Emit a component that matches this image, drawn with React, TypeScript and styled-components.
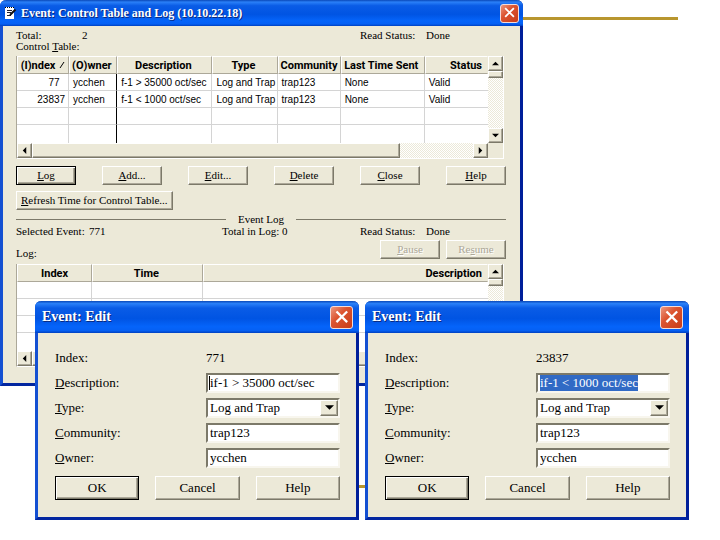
import React, { useEffect, useRef } from "react";
import styled, { createGlobalStyle, css } from "styled-components";

const face = "#ece9d8";
const shade = "#7c7969";

const GlobalStyle = createGlobalStyle`
  *, *::before, *::after { box-sizing: border-box; }
  body { margin: 0; background: #fff; color: #000; font-family: "Liberation Serif", serif; }
  button, input, select { font: inherit; color: inherit; margin: 0; border-radius: 0; }
`;

const Desktop = styled.main`
  position: relative;
  min-height: 100vh;
  overflow: hidden;
`;

const Rule = styled.div<{ $top: number }>`
  position: absolute;
  top: ${(p) => p.$top}px;
  left: 42px;
  right: 42px;
  height: 3px;
  background: #b8962e;
`;

const Win = styled.section`
  position: absolute;
  border: 3px solid #0a3cc0;
  border-top: 0;
  border-left-color: #1450d2;
  border-right-color: #001f9a;
  border-bottom-color: #0226a0;
  border-radius: 6px 6px 0 0;
  background: ${face};
`;

const MainWin = styled(Win)`
  top: 0;
  left: 0;
  width: calc(75% - 17px);
  font-size: 11px;
  line-height: 11px;
`;

const DialogWin = styled(Win)<{ $left: string; $z: number }>`
  top: 301px;
  left: ${(p) => p.$left};
  z-index: ${(p) => p.$z};
  width: 45%;
  font-size: 13px;
  line-height: 16px;
`;

const TitleBar = styled.header<{ $size: "small" | "large" }>`
  display: flex;
  align-items: center;
  gap: 4px;
  margin: 0 -3px;
  height: ${(p) => (p.$size === "small" ? 26 : 32)}px;
  padding: 0 ${(p) => (p.$size === "small" ? 4 : 6)}px 0 ${(p) => (p.$size === "small" ? 4 : 7)}px;
  border-radius: 6px 6px 0 0;
  color: #fff;
  background: linear-gradient(#0a48b8 0, #2a80f8 8%, #0a5ce6 22%, #0054e3 55%, #0564fa 80%, #0560f4 92%, #0040c0 100%);
`;

const Title = styled.h1<{ $size: "small" | "large" }>`
  flex: 1;
  margin: 0;
  font-size: ${(p) => (p.$size === "small" ? 12 : 14)}px;
  font-weight: 700;
  line-height: 16px;
  white-space: nowrap;
  text-shadow: 1px 1px 0 #0a2a80;
`;

const CloseButton = styled.button<{ $size: "small" | "large" }>`
  display: grid;
  place-items: center;
  width: ${(p) => (p.$size === "small" ? 19 : 23)}px;
  height: ${(p) => (p.$size === "small" ? 19 : 23)}px;
  padding: 0;
  border: 1px solid #f4dcd8;
  border-radius: 3px;
  background: linear-gradient(135deg, #ec9880 0, #dc5430 40%, #c83c18 100%);
  svg { width: 65%; height: 65%; }
`;

const raised = css`
  background: ${face};
  border: 1px solid;
  border-color: #fff ${shade} ${shade} #fff;
  box-shadow: inset -1px -1px 0 #aca899;
`;

const PushButton = styled.button<{ $default?: boolean }>`
  ${raised}
  height: 19px;
  padding: 0;
  white-space: nowrap;
  ${(p) => p.$default && css`
    border-color: #000;
    box-shadow: inset 1px 1px 0 #fff, inset -1px -1px 0 ${shade}, inset -2px -2px 0 #aca899;
  `}
  &:disabled { color: #aca899; text-shadow: 1px 1px 0 #fff; }
`;

const DialogButton = styled(PushButton)`
  height: 24px;
`;

const WideButton = styled(PushButton)`
  padding: 0 4px;
`;

const Body = styled.div`
  padding: 4px 14px 16px 13px;
`;

const StatusLine = styled.div<{ $columns: string }>`
  display: grid;
  grid-template-columns: ${(p) => p.$columns};
  white-space: nowrap;
`;

const Caption = styled.div`
  margin-bottom: 4px;
`;

const ButtonRow = styled.div`
  display: grid;
  grid-template-columns: repeat(6, 1fr);
  gap: 26px;
  margin: 7px 0 6px;
`;

const GroupHeading = styled.h2`
  display: grid;
  grid-template-columns: 1fr auto 1fr;
  align-items: center;
  gap: 12px;
  margin: 4px 0 1px;
  font: inherit;
  &::before, &::after { content: ""; height: 1px; background: ${shade}; }
`;

const LogTools = styled.div`
  display: grid;
  grid-template-columns: 1fr 60px 60px;
  align-items: end;
  gap: 6px;
  margin: 3px 0 5px;
`;

const GridFrame = styled.div`
  display: grid;
  grid-template-columns: minmax(0, 1fr) 15px;
  margin: 0 2px 0 0;
  border: 1px solid #aca899;
  border-color: #aca899 #fff #fff #aca899;
  border-top: 0;
`;

const Table = styled.table`
  width: 100%;
  table-layout: fixed;
  border-collapse: separate;
  border-spacing: 0;
  background: #fff;
  font-family: "Liberation Sans", sans-serif;
  font-size: 10px;
`;

const HeadCell = styled.th<{ $align?: string }>`
  height: 18px;
  padding: 0 5px 0 2px;
  overflow: hidden;
  background: ${face};
  border: 1px solid;
  border-color: #fff #aca899 #aca899 #fff;
  font-family: Roboto, sans-serif;
  font-size: 11px;
  font-weight: 700;
  white-space: nowrap;
  text-align: ${(p) => p.$align ?? "center"};
  &:first-child { padding: 0 2px; }
  &:last-child { border-right-color: ${face}; }
  svg { margin-left: 4px; }
`;

const Cell = styled.td<{ $align?: string; $strong?: boolean }>`
  height: 17px;
  padding: 0 3px 0 4px;
  overflow: hidden;
  white-space: nowrap;
  text-align: ${(p) => p.$align ?? "left"};
  border: solid #d4d4d4;
  border-width: 0 1px 1px 0;
  ${(p) => p.$strong && css`border-right-color: #000;`}
  &:last-child { border-right: 0; }
  tr:last-child > & { height: 18px; border-bottom: 0; }
`;

const track = css`
  background: repeating-conic-gradient(#fff 0 25%, ${face} 0 50%) 0 0 / 2px 2px;
`;

const VScroll = styled.div`
  ${track}
  display: grid;
  grid-template-rows: 15px 7px 1fr 15px;
`;

const HScroll = styled.div`
  ${track}
  display: grid;
  grid-template-columns: 15px 5fr 1fr 15px;
  height: 15px;
`;

const Thumb = styled.div`
  ${raised}
`;

const Corner = styled.div`
  background: ${face};
`;

const ArrowButton = styled.button`
  ${raised}
  display: grid;
  place-items: center;
  padding: 0;
`;

const Form = styled.form`
  display: grid;
  grid-template-columns: minmax(0, 151fr) minmax(0, 134fr);
  grid-auto-rows: 25px;
  align-items: center;
  padding: 12px 16px 22px 17px;
`;

const Field = styled.div`
  position: relative;
  display: flex;
  height: 20px;
  background: #fff;
  border: 2px solid;
  border-color: ${shade} #f8f6ee #f8f6ee ${shade};
`;

const TextInput = styled.input`
  width: 100%;
  min-width: 0;
  padding: 0 0 0 2px;
  border: 0;
  outline: 0;
  background: transparent;
  &::selection { background: #316ac5; color: #fff; }
`;

const TextCaret = styled.span`
  position: absolute;
  left: 1px;
  top: 1px;
  bottom: 1px;
  width: 1px;
  background: #000;
`;

const Picker = styled.select`
  flex: 1;
  min-width: 0;
  padding: 0 0 0 2px;
  border: 0;
  outline: 0;
  appearance: none;
  background: transparent;
`;

const DropMark = styled.span`
  ${raised}
  display: grid;
  place-items: center;
  width: 18px;
  pointer-events: none;
`;

const Actions = styled.div`
  grid-column: 1 / -1;
  display: grid;
  grid-template-columns: repeat(3, 1fr);
  gap: 16px;
  align-self: start;
  margin-top: 6px;
`;

type Direction = "up" | "down" | "left" | "right";
const arrowPoints: Record<Direction, string> = {
  up: "0,6 8,6 4,2",
  down: "0,2 8,2 4,6",
  left: "6,0 6,8 2,4",
  right: "2,0 2,8 6,4",
};

const Arrow = ({ to, size = 7 }: { to: Direction; size?: number }) => (
  <svg width={size} height={size} viewBox="0 0 8 8" aria-hidden="true">
    <polygon points={arrowPoints[to]} fill="#000" />
  </svg>
);

const CloseMark = () => (
  <svg viewBox="0 0 12 12" aria-hidden="true">
    <path d="M2 2 L10 10 M10 2 L2 10" stroke="#fff" strokeWidth="2" strokeLinecap="square" />
  </svg>
);

const NoteIcon = () => (
  <svg width="13" height="14" viewBox="0 0 13 14" aria-hidden="true">
    <path d="M1 1 H10 V13 H1 Z" fill="#fff" />
    <path d="M1 1.5 H10" stroke="#000" strokeDasharray="1 1" />
    <path d="M3 4.5 H8 M3 6.5 H7 M3 9.5 H7" stroke="#223" />
    <path d="M6 9 L11.5 3.5" stroke="#111" strokeWidth="2" />
  </svg>
);

const Hot = ({ text }: { text: string }) => (
  <>
    <u>{text[0]}</u>
    {text.slice(1)}
  </>
);

const VerticalBar = () => (
  <VScroll>
    <ArrowButton type="button" aria-label="Scroll up"><Arrow to="up" /></ArrowButton>
    <Thumb />
    <span />
    <ArrowButton type="button" aria-label="Scroll down"><Arrow to="down" /></ArrowButton>
  </VScroll>
);

const HorizontalBar = () => (
  <HScroll>
    <ArrowButton type="button" aria-label="Scroll left"><Arrow to="left" /></ArrowButton>
    <Thumb />
    <span />
    <ArrowButton type="button" aria-label="Scroll right"><Arrow to="right" /></ArrowButton>
  </HScroll>
);

const controlColumns = [
  { name: "(I)ndex", width: 52 },
  { name: "(O)wner", width: 48 },
  { name: "Description", width: 95 },
  { name: "Type", width: 65 },
  { name: "Community", width: 63 },
  { name: "Last Time Sent", width: 84 },
  { name: "Status", width: 63, align: "right" },
];

const controlRows = [
  ["77\u00a0\u00a0", "ycchen", "f-1 > 35000 oct/sec", "Log and Trap", "trap123", "None", "Valid"],
  ["23837", "ycchen", "f-1 < 1000 oct/sec", "Log and Trap", "trap123", "None", "Valid"],
  ["", "", "", "", "", "", ""],
  ["", "", "", "", "", "", ""],
];

const logColumns = [
  { name: "Index", width: 75 },
  { name: "Time", width: 111 },
  { name: "Description", width: 284, align: "right" },
];

const logRows = [["", "", ""], ["", "", ""], ["", "", ""], ["", "", ""]];

type Column = { name: string; width: number; align?: string };

const DataGrid = ({ columns, rows, sorted }: { columns: Column[]; rows: string[][]; sorted?: boolean }) => {
  const total = columns.reduce((sum, c) => sum + c.width, 0);
  return (
    <GridFrame>
      <Table>
        <colgroup>
          {columns.map((c) => <col key={c.name} style={{ width: `${(c.width / total) * 100}%` }} />)}
        </colgroup>
        <thead>
          <tr>
            {columns.map((c, i) => (
              <HeadCell key={c.name} scope="col" $align={c.align}>
                {c.name}
                {sorted && i === 0 && (
                  <svg width="6" height="8" viewBox="0 0 6 8" aria-hidden="true">
                    <path d="M1 7 L5 1" stroke="#000" />
                  </svg>
                )}
              </HeadCell>
            ))}
          </tr>
        </thead>
        <tbody>
          {rows.map((row, r) => (
            <tr key={r}>
              {row.map((value, i) => (
                <Cell key={i} $align={i === 0 ? "right" : "left"} $strong={sorted && i === 1}>{value}</Cell>
              ))}
            </tr>
          ))}
        </tbody>
      </Table>
      <VerticalBar />
      <HorizontalBar />
      <Corner />
    </GridFrame>
  );
};

type EditProps = { id: string; left: string; z: number; index: string; description: string; selected?: boolean };

const EditDialog = ({ id, left, z, index, description, selected }: EditProps) => {
  const input = useRef<HTMLInputElement>(null);
  useEffect(() => {
    if (selected) {
      input.current?.focus();
      input.current?.select();
    }
  }, [selected]);
  return (
    <DialogWin $left={left} $z={z} role="dialog" aria-labelledby={`${id}-title`}>
      <TitleBar $size="large">
        <Title $size="large" id={`${id}-title`}>Event: Edit</Title>
        <CloseButton $size="large" aria-label="Close"><CloseMark /></CloseButton>
      </TitleBar>
      <Form onSubmit={(e) => e.preventDefault()}>
        <span>Index:</span>
        <span>{index}</span>
        <label htmlFor={`${id}-description`}><Hot text="Description:" /></label>
        <Field>
          <TextInput ref={input} id={`${id}-description`} defaultValue={description} />
          {!selected && <TextCaret />}
        </Field>
        <label htmlFor={`${id}-type`}><Hot text="Type:" /></label>
        <Field>
          <Picker id={`${id}-type`} defaultValue="Log and Trap">
            <option>Log and Trap</option>
          </Picker>
          <DropMark><Arrow to="down" size={9} /></DropMark>
        </Field>
        <label htmlFor={`${id}-community`}><Hot text="Community:" /></label>
        <Field><TextInput id={`${id}-community`} defaultValue="trap123" /></Field>
        <label htmlFor={`${id}-owner`}><Hot text="Owner:" /></label>
        <Field><TextInput id={`${id}-owner`} defaultValue="ycchen" /></Field>
        <Actions>
          <DialogButton type="submit" $default>OK</DialogButton>
          <DialogButton type="button">Cancel</DialogButton>
          <DialogButton type="button">Help</DialogButton>
        </Actions>
      </Form>
    </DialogWin>
  );
};

export default function App() {
  return (
    <>
      <GlobalStyle />
      <Desktop>
        <Rule $top={17} />
        <Rule $top={485} />
        <MainWin>
          <TitleBar $size="small">
            <NoteIcon />
            <Title $size="small">Event: Control Table and Log (10.10.22.18)</Title>
            <CloseButton $size="small" aria-label="Close"><CloseMark /></CloseButton>
          </TitleBar>
          <Body>
            <StatusLine $columns="66px 1fr 66px 80px">
              <span>Total:</span><span>2</span><span>Read Status:</span><span>Done</span>
            </StatusLine>
            <Caption>Control <u>T</u>able:</Caption>
            <DataGrid columns={controlColumns} rows={controlRows} sorted />
            <ButtonRow>
              <PushButton $default><Hot text="Log" /></PushButton>
              <PushButton><Hot text="Add..." /></PushButton>
              <PushButton><Hot text="Edit..." /></PushButton>
              <PushButton><Hot text="Delete" /></PushButton>
              <PushButton><Hot text="Close" /></PushButton>
              <PushButton><Hot text="Help" /></PushButton>
            </ButtonRow>
            <WideButton><Hot text="Refresh Time for Control Table..." /></WideButton>
            <GroupHeading>Event Log</GroupHeading>
            <StatusLine $columns="73px 133px 1fr 66px 80px">
              <span>Selected Event:</span><span>771</span><span>Total in Log: 0</span>
              <span>Read Status:</span><span>Done</span>
            </StatusLine>
            <LogTools>
              <span>Log:</span>
              <PushButton disabled><Hot text="Pause" /></PushButton>
              <PushButton disabled>Re<u>s</u>ume</PushButton>
            </LogTools>
            <DataGrid columns={logColumns} rows={logRows} />
          </Body>
        </MainWin>
        <EditDialog id="first" left="35px" z={1} index="771" description="if-1 > 35000 oct/sec" />
        <EditDialog id="second" left="calc(50% + 5px)" z={2} index="23837" description="if-1 < 1000 oct/sec" selected />
      </Desktop>
    </>
  );
}
